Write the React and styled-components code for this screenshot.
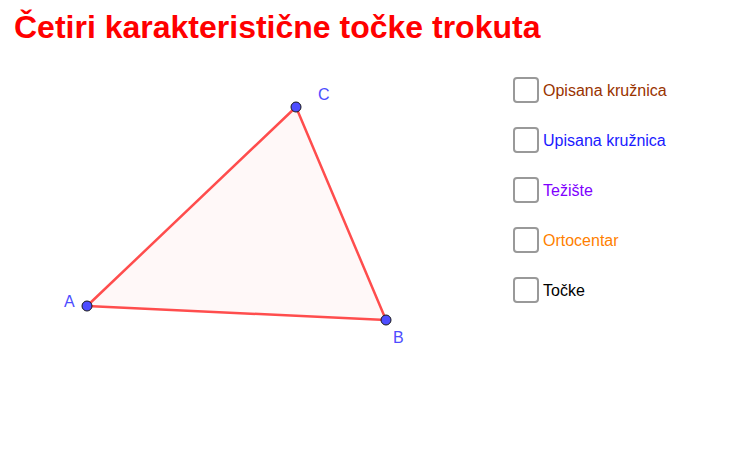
import React from 'react'
import styled, { createGlobalStyle } from 'styled-components'

const GlobalStyle = createGlobalStyle`
    html, body {
        margin: 0;
        padding: 0;
        background: #ffffff;
        font-family: "Liberation Sans", Arial, sans-serif;
    }
`

const options = [
    { label: 'Opisana kružnica', color: '#993300' },
    { label: 'Upisana kružnica', color: '#1a1aff' },
    { label: 'Težište', color: '#8000ff' },
    { label: 'Ortocentar', color: '#ff7f00' },
    { label: 'Točke', color: '#000000' },
]

const A = { x: 87, y: 256 }
const B = { x: 386, y: 270 }
const C = { x: 296, y: 57 }

function App() {
    return (
        <Page>
            <GlobalStyle />
            <Title>Četiri karakteristične točke trokuta</Title>
            <Body>
                <Canvas width="513" height="412" viewBox="0 0 513 412">
                    <polygon
                        points={`${A.x},${A.y} ${B.x},${B.y} ${C.x},${C.y}`}
                        fill="#fff8f8"
                        stroke="#ff4d4d"
                        strokeWidth="2.5"
                        strokeLinejoin="round"
                    />
                    {[A, B, C].map((p, i) => (
                        <circle key={i} cx={p.x} cy={p.y} r="5" fill="#4d4dff" stroke="#1a1a1a" strokeWidth="1" />
                    ))}
                    <PointLabel x="64" y="257">A</PointLabel>
                    <PointLabel x="393" y="293">B</PointLabel>
                    <PointLabel x="318" y="50">C</PointLabel>
                </Canvas>
                <Controls>
                    {options.map((o) => (
                        <Option key={o.label}>
                            <Box type="checkbox" />
                            <OptionText color={o.color}>{o.label}</OptionText>
                        </Option>
                    ))}
                </Controls>
            </Body>
        </Page>
    )
}

export default App

const Page = styled.div`
    width: 754px;
    height: 462px;
    overflow: hidden;
    display: flex;
    flex-direction: column;
`

const Title = styled.h1`
    margin: 0;
    height: 50px;
    padding: 7px 0 0 14px;
    box-sizing: border-box;
    font-size: 32px;
    font-weight: bold;
    line-height: 40px;
    color: #ff0000;
`

const Body = styled.div`
    display: flex;
    flex: 1;
`

const Canvas = styled.svg`
    display: block;
    flex: none;
`

const PointLabel = styled.text`
    font-family: "Liberation Sans", Arial, sans-serif;
    font-size: 16px;
    fill: #4d4dff;
`

const Controls = styled.div`
    display: flex;
    flex-direction: column;
    gap: 24px;
    padding-top: 27px;
`

const Option = styled.label`
    display: flex;
    align-items: center;
    height: 26px;
`

const Box = styled.input`
    appearance: none;
    margin: 0 4px 0 0;
    width: 26px;
    height: 26px;
    box-sizing: border-box;
    border: 2px solid #999999;
    border-radius: 4px;
    background: #ffffff;
`

const OptionText = styled.span`
    padding-top: 2px;
    font-size: 16px;
    color: ${(p) => p.color};
`
